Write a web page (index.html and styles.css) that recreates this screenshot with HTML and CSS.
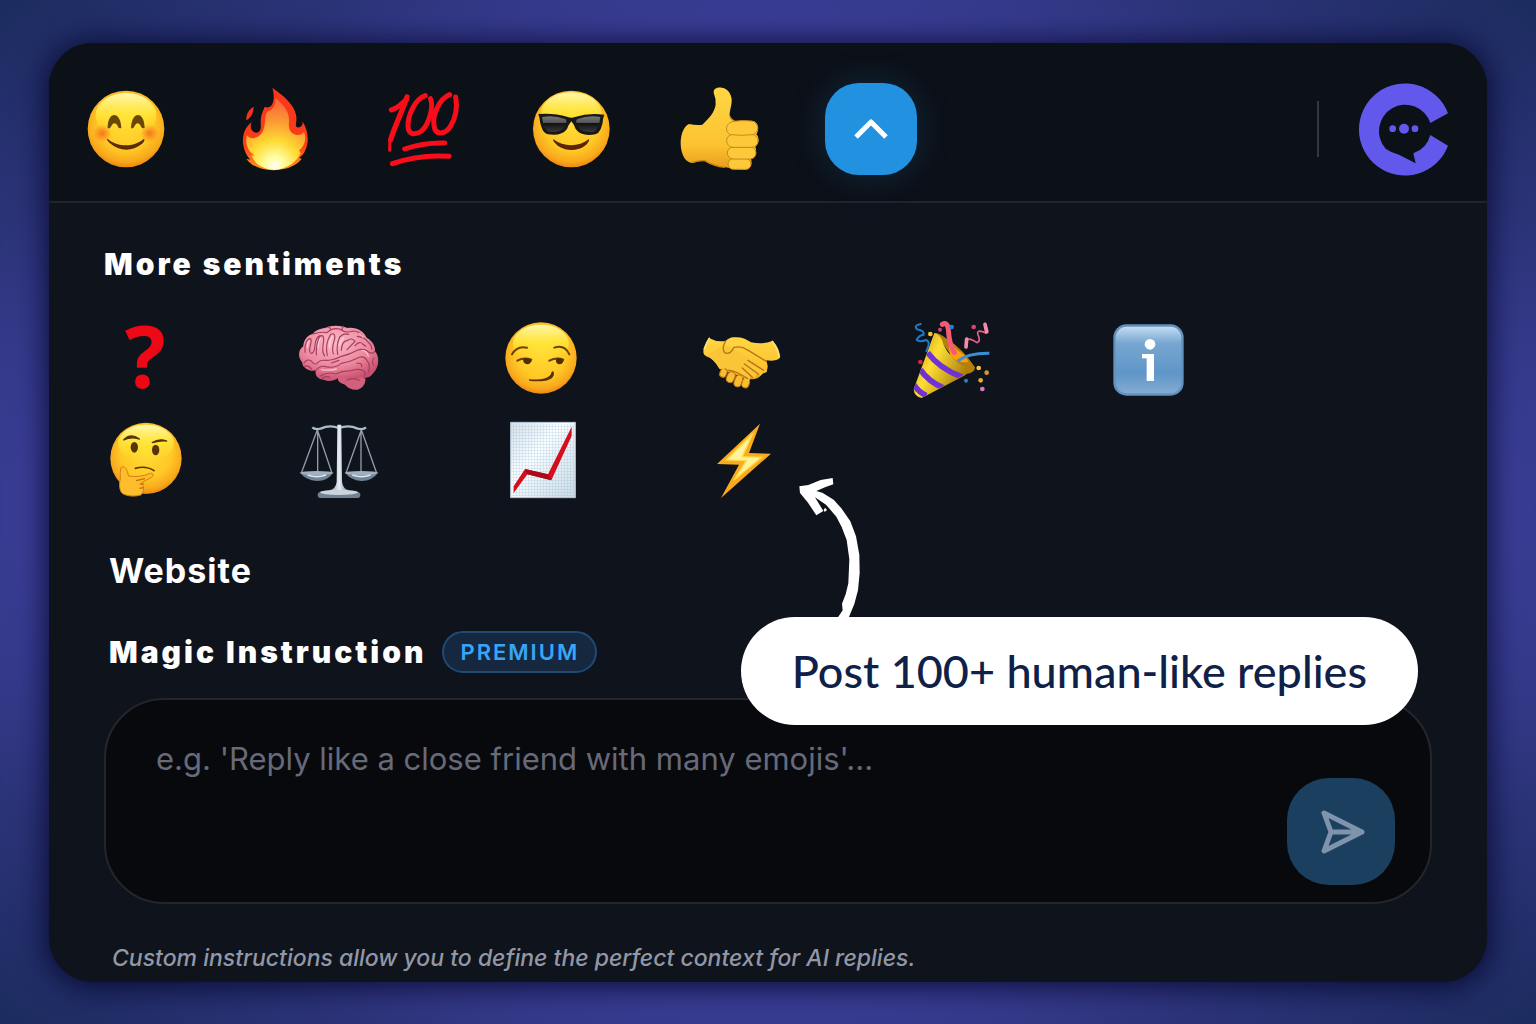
FILE: index.html
```html
<!DOCTYPE html>
<html lang="en">
<head>
    <meta charset="UTF-8">
    <meta name="viewport" content="width=device-width, initial-scale=1.0">
    <title>Reply Composer</title>
    <link rel="stylesheet" href="styles.css">
</head>
<body>
    <!-- Shared gradients -->
    <svg class="defs" width="0" height="0" aria-hidden="true">
        <defs>
            <radialGradient id="face" cx="0.5" cy="0.42" r="0.6">
                <stop offset="0" stop-color="#ffdc35"/>
                <stop offset="0.6" stop-color="#ffc825"/>
                <stop offset="0.85" stop-color="#f9a81c"/>
                <stop offset="1" stop-color="#e87f11"/>
            </radialGradient>
            <linearGradient id="shine" x1="0" y1="0" x2="0" y2="1">
                <stop offset="0" stop-color="#fff8b0"/>
                <stop offset="0.5" stop-color="#ffec3c" stop-opacity="0.7"/>
                <stop offset="1" stop-color="#ffdc2e" stop-opacity="0"/>
            </linearGradient>
            <radialGradient id="blush">
                <stop offset="0" stop-color="#f4581c" stop-opacity="0.75"/>
                <stop offset="1" stop-color="#f4581c" stop-opacity="0"/>
            </radialGradient>
            <linearGradient id="skin" x1="0" y1="0" x2="0" y2="1">
                <stop offset="0" stop-color="#ffd645"/>
                <stop offset="0.7" stop-color="#fcc32f"/>
                <stop offset="1" stop-color="#e79a1f"/>
            </linearGradient>
            <linearGradient id="flame" x1="0" y1="0" x2="0" y2="1">
                <stop offset="0" stop-color="#f8361e"/>
                <stop offset="0.7" stop-color="#fb3d17"/>
                <stop offset="1" stop-color="#ff9a1c"/>
            </linearGradient>
            <radialGradient id="core" gradientUnits="userSpaceOnUse" cx="614" cy="284" r="190">
                <stop offset="0" stop-color="#fffff0"/>
                <stop offset="0.16" stop-color="#fffc9a"/>
                <stop offset="0.4" stop-color="#ffd932"/>
                <stop offset="0.7" stop-color="#fb9a35"/>
                <stop offset="1" stop-color="#f96a35"/>
            </radialGradient>
            <linearGradient id="lens" x1="0" y1="0" x2="0" y2="1">
                <stop offset="0" stop-color="#777"/>
                <stop offset="0.4" stop-color="#555"/>
                <stop offset="0.45" stop-color="#111"/>
                <stop offset="1" stop-color="#3a3a3a"/>
            </linearGradient>
            <radialGradient id="brain" cx="0.45" cy="0.3" r="0.7">
                <stop offset="0" stop-color="#fbb9c4"/>
                <stop offset="0.6" stop-color="#ec8ba0"/>
                <stop offset="1" stop-color="#c9506f"/>
            </radialGradient>
            <linearGradient id="metal" x1="0" y1="0" x2="1" y2="0">
                <stop offset="0" stop-color="#66809a"/>
                <stop offset="0.5" stop-color="#e8f0f6"/>
                <stop offset="1" stop-color="#5f7488"/>
            </linearGradient>
            <linearGradient id="cone" x1="0" y1="0" x2="1" y2="0.6">
                <stop offset="0" stop-color="#b98708"/>
                <stop offset="0.45" stop-color="#ffdf35"/>
                <stop offset="1" stop-color="#a87a0a"/>
            </linearGradient>
            <linearGradient id="info" x1="0" y1="0" x2="0" y2="1">
                <stop offset="0" stop-color="#c3dcf2"/>
                <stop offset="0.25" stop-color="#76a6d1"/>
                <stop offset="0.7" stop-color="#5f96c8"/>
                <stop offset="1" stop-color="#83acd2"/>
            </linearGradient>
            <linearGradient id="paper" x1="0" y1="0" x2="1" y2="1">
                <stop offset="0" stop-color="#d5dee7"/>
                <stop offset="0.4" stop-color="#fdfeff"/>
                <stop offset="1" stop-color="#cbd9e4"/>
            </linearGradient>
            <pattern id="squares" width="9" height="9" patternUnits="userSpaceOnUse">
                <path d="M0 0H9M0 0V9" stroke="#8ebedb" stroke-width="2.4"/>
            </pattern>
            <clipPath id="cone-clip"><path d="M136 99L74 268Q76 290 98 294L258 206Q200 180 170 112Q150 94 136 99Z"/></clipPath>
        </defs>
    </svg>

    <main class="panel">
        <header class="toolbar">
            <button class="tool" type="button" aria-label="Smile">
                <svg viewBox="42 48 252 252">
                    <circle cx="168" cy="174" r="115" fill="url(#face)"/>
                    <ellipse cx="168" cy="132" rx="91" ry="66" fill="url(#shine)"/>
                    <circle cx="97" cy="187" r="27" fill="url(#blush)"/>
                    <circle cx="239" cy="187" r="27" fill="url(#blush)"/>
                    <path d="M113 171C113 119 152 119 154 171Q147 174 144 167C140 153 127 153 123 167Q118 175 113 171Z" fill="#6b4704"/>
                    <path d="M183 171C185 119 223 119 224 171Q217 174 213 167C209 153 197 153 193 167Q187 175 183 171Z" fill="#6b4704"/>
                    <path d="M112 203C143 229 191 230 221 204C227 206 220 216 214 220C188 242 147 242 120 217C113 210 109 205 112 203Z" fill="#5b2c06"/>
                </svg>
            </button>
            <button class="tool" type="button" aria-label="Fire">
                <svg viewBox="489 48 252 252">
                    <path d="M551 107C534 117 528 131 529 148C541 140 550 132 551 107Z" fill="#ef341c"/>
                    <path d="M607 51C631 67 675 99 679 137C681 155 673 166 682 169C694 171 700 161 697 151C714 176 719 211 706 237C702 249 694 255 688 260L695 264C686 275 676 281 666 286C638 301 588 301 560 287C544 281 536 273 529 263L541 266C525 248 515 221 520 194C524 175 534 162 545 154C538 169 544 182 558 185C574 186 573 167 572 153C572 131 581 116 584 107Q594 113 604 104C613 91 613 70 607 51Z" fill="url(#flame)"/>
                    <path d="M617 81C638 100 659 120 657 151C655 172 659 187 680 192C692 193 698 188 702 182C711 205 703 226 687 238L692 247C681 270 657 293 614 297C576 293 553 278 545 253L554 254C532 240 524 215 531 193C541 208 568 203 579 180C590 155 580 135 594 121C608 117 617 103 617 81Z" fill="url(#core)"/>
                </svg>
            </button>
            <button class="tool" type="button" aria-label="Hundred">
                <svg viewBox="36 48 252 252" fill="none" stroke="#fa0d1b" stroke-linecap="round" stroke-linejoin="round">
                    <path d="M64 117Q84 112 110 84" stroke-width="15"/>
                    <path d="M111 78C96 123 75 163 62 206" stroke-width="16"/>
                    <path d="M64 191Q57 214 59 238" stroke-width="9"/>
                    <path d="M166 74C136 83 113 133 114 166C115 195 140 191 155 180C178 158 192 105 181 83" stroke-width="15"/>
                    <path d="M239 71C207 84 187 133 192 164C196 197 228 188 241 167C258 139 262 105 257 78" stroke-width="15"/>
                    <path d="M104 234Q163 214 224 216" stroke-width="15"/>
                    <path d="M67 278Q150 249 237 256" stroke-width="15"/>
                </svg>
            </button>
            <button class="tool" type="button" aria-label="Cool">
                <svg viewBox="483 48 252 252">
                    <circle cx="604" cy="174" r="115" fill="url(#face)"/>
                    <ellipse cx="604" cy="124" rx="90" ry="60" fill="url(#shine)"/>
                    <path d="M550 205C579 228 627 229 656 205C661 209 650 221 643 226C619 242 586 240 563 224C554 216 547 208 550 205Z" fill="#5b2506"/>
                    <path d="M505 129Q552 125 593 138Q604 142 615 138Q655 125 703 131L700 140Q696 184 676 190Q633 197 617 174Q612 160 604 151Q596 160 591 174Q575 196 534 190Q514 187 508 139Z" fill="#181818"/>
                    <path d="M516 138Q552 132 586 144Q593 149 584 168Q570 187 536 182Q521 176 516 138Z" fill="url(#lens)"/>
                    <path d="M691 138Q655 132 622 144Q614 149 624 168Q638 187 672 182Q687 176 691 138Z" fill="url(#lens)"/>
                </svg>
            </button>
            <button class="tool" type="button" aria-label="Thumbs up">
                <svg viewBox="60 48 252 252">
                    <path d="M87 159Q108 163 127 161C145 143 163 126 167 101Q169 86 162 69C157 53 172 47 186 50C204 53 214 70 215 85C216 104 208 119 209 134Q213 144 225 151L277 150C295 152 300 175 289 190C299 200 298 218 286 227C291 238 288 255 273 264C278 277 272 295 258 296Q227 298 197 289Q158 284 134 269Q115 270 97 276C55 274 50 176 87 159Z" fill="url(#skin)"/>
                    <g fill="#fdc93a" stroke="#c98a16" stroke-width="3">
                        <rect x="204" y="263" width="69" height="32" rx="16"/>
                        <rect x="202" y="228" width="86" height="36" rx="18"/>
                        <rect x="200" y="190" width="94" height="39" rx="19"/>
                        <path d="M222 151Q246 147 275 150C298 153 299 188 277 191Q244 195 212 191C194 184 194 156 222 151Z"/>
                    </g>
                    <path d="M210 137Q213 147 225 151M97 274Q117 268 133 268Q160 285 195 289" fill="none" stroke="#c9860f" stroke-width="4"/>
                </svg>
            </button>
            <button class="tool toggle" type="button" aria-label="Show fewer" aria-expanded="true">
                <svg viewBox="0 0 40 40" fill="none" stroke="#fff" stroke-width="5" stroke-linejoin="round">
                    <path d="M5 28L20 13L35 28"/>
                </svg>
            </button>
            <span class="divider"></span>
            <svg class="logo" viewBox="204 66 276 276" role="img" aria-label="Logo" fill="#6259ec">
                <path d="M477 157A138 138 0 1 0 477 254L424 222A79 79 0 0 1 373 277L380 307L330 281Q308 276 290 263A79 79 0 1 1 424 186Z"/>
                <circle cx="311" cy="203" r="10"/>
                <circle cx="345" cy="203" r="15"/>
                <circle cx="378" cy="203" r="10"/>
            </svg>
        </header>

        <div class="content">
            <h2 class="heading">More sentiments</h2>
            <div class="sentiments">
                <button class="sentiment" type="button" aria-label="Question">
                    <svg viewBox="45 54 240 240">
                        <text class="question" x="168" y="264" text-anchor="middle">?</text>
                    </svg>
                </button>
                <button class="sentiment" type="button" aria-label="Brain">
                    <svg viewBox="648 54 240 240">
                        <path d="M750 226Q738 246 768 254Q782 271 806 269Q828 262 830 237L800 218Z" fill="#d0607c"/>
                        <path d="M640 188C626 172 627 150 643 139C643 119 657 105 672 101C684 83 709 86 718 80C739 74 763 78 776 84C803 81 823 93 833 113C851 123 860 140 858 154C873 171 870 203 853 219C844 233 829 236 817 232C798 240 772 235 752 231C736 244 718 246 704 239C688 239 677 228 680 211C666 216 639 204 640 188Z" fill="url(#brain)"/>
                        <g fill="none" stroke="#a63d60" stroke-width="3.5" stroke-linecap="round">
                            <path d="M645 189Q654 174 668 184Q671 192 683 192Q691 179 709 181Q732 181 754 170Q782 164 806 150Q827 144 841 158Q855 162 857 154"/>
                            <path d="M681 211Q693 195 711 200Q737 206 757 190Q785 185 804 175Q823 164 834 181Q846 196 838 217"/>
                            <path d="M694 228Q718 214 740 222Q764 211 783 213Q804 204 820 211Q832 216 827 229"/>
                            <path d="M648 157Q646 128 659 117Q671 111 664 137Q658 159 668 160Q677 158 678 136Q680 111 693 107M682 165Q681 132 691 111Q705 99 704 123Q697 157 707 168"/>
                            <path d="M715 166Q707 132 725 103Q740 96 737 117Q726 151 734 162M746 163Q741 136 752 111Q764 98 779 103M757 151Q759 123 774 122Q788 111 798 124Q788 135 774 149"/>
                            <path d="M672 102Q697 94 714 98Q729 82 752 87Q770 101 791 93Q814 93 820 111M805 109Q828 112 837 126Q849 136 848 147M798 137Q812 121 821 132L830 139M718 80L727 89M763 79L758 90"/>
                            <path d="M698 236Q711 226 723 232M774 241Q790 231 811 241M855 174Q847 184 853 195M647 199Q657 194 668 207M804 190Q820 188 818 200M727 189L750 181"/>
                        </g>
                        <path d="M655 143Q654 130 660 123M687 142Q689 122 695 115M722 143Q720 125 730 109M751 136Q753 122 764 113M812 100L822 112M697 209Q722 213 742 207M820 151Q833 151 838 169" fill="none" stroke="#ffdae0" stroke-width="4" stroke-linecap="round" opacity="0.75"/>
                    </svg>
                </button>
                <button class="sentiment" type="button" aria-label="Smirk">
                    <svg viewBox="51 54 240 240">
                        <circle cx="156" cy="174" r="107" fill="url(#face)"/>
                        <ellipse cx="156" cy="130" rx="84" ry="56" fill="url(#shine)"/>
                        <g fill="none" stroke="#6c4203" stroke-width="6" stroke-linecap="round">
                            <path d="M69 163Q84 136 114 143M196 143Q227 133 241 163"/>
                            <path d="M85 182Q105 170 127 179M181 182Q203 170 223 179"/>
                        </g>
                        <path d="M102 177Q118 171 128 181Q126 192 115 193Q102 192 102 177ZM201 177Q214 171 224 181Q222 193 211 193Q199 192 201 177Z" fill="#4c2d05"/>
                        <path d="M120 238C153 241 184 235 187 218Q192 209 195 219C196 244 161 245 124 243Q118 242 120 238Z" fill="#5b3005"/>
                    </svg>
                </button>
                <button class="sentiment" type="button" aria-label="Handshake">
                    <svg viewBox="654 54 240 240">
                        <path d="M661 115Q652 125 645 143Q639 163 651 168Q675 176 691 206L776 237Q807 242 819 223Q837 215 836 198L832 181Q861 185 872 174Q872 144 850 123Q824 134 786 127Q762 109 735 112Q724 110 710 123Q683 127 661 115Z" fill="url(#skin)"/>
                        <g fill="#f9bd32" stroke="#ba7710" stroke-width="3">
                            <rect x="693" y="205" width="20" height="27" rx="10" transform="rotate(22 703 219)"/>
                            <rect x="714" y="215" width="23" height="33" rx="11" transform="rotate(23 725 231)"/>
                            <rect x="737" y="225" width="22" height="36" rx="11" transform="rotate(20 748 243)"/>
                            <rect x="759" y="234" width="22" height="30" rx="11" transform="rotate(15 770 249)"/>
                        </g>
                        <path d="M691 205Q672 172 651 168L703 136Q738 145 772 170L835 212Q831 222 819 215Q822 231 801 223Q804 238 782 231Q787 243 772 241Q751 219 736 218Q718 199 702 207Z" fill="#fac638"/>
                        <path d="M710 123Q697 145 707 158Q724 166 735 142Q758 137 774 149L832 184M777 181L824 211M766 192L809 223M760 204L790 232M718 211Q736 210 776 236" fill="none" stroke="#b87310" stroke-width="4" stroke-linecap="round"/>
                        <path d="M661 115Q653 127 646 146M850 124Q868 147 871 171" fill="none" stroke="#ffe17a" stroke-width="5" stroke-linecap="round"/>
                    </svg>
                </button>
                <button class="sentiment" type="button" aria-label="Party">
                    <svg viewBox="57 54 240 240">
                        <path d="M136 99Q151 99 171 115Q220 145 258 202Q258 219 230 222Z" fill="#b57f0b"/>
                        <path d="M179 140Q187 126 205 151Q227 162 238 185Q211 193 184 169Z" fill="#ff9d0c"/>
                        <path d="M136 99L74 268Q76 290 98 294L231 224Q238 215 233 206Q181 174 164 135Q155 101 136 99Z" fill="url(#cone)"/>
                        <g clip-path="url(#cone-clip)" fill="none" stroke="#7132d4" stroke-width="17">
                            <path d="M116 158Q151 206 219 231"/>
                            <path d="M94 209Q119 246 166 265"/>
                            <path d="M75 254Q87 275 112 287"/>
                        </g>
                        <path d="M160 73Q174 64 178 87Q180 132 196 157" fill="none" stroke="#f65a76" stroke-width="15" stroke-linecap="round"/>
                        <path d="M206 183Q238 159 301 160" fill="none" stroke="#3990d6" stroke-width="9"/>
                        <path d="M95 72Q73 76 84 88Q106 92 104 104Q91 105 83 119Q93 128 111 120Q127 126 112 153" fill="none" stroke="#2179c6" stroke-width="6" stroke-linecap="round"/>
                        <path d="M288 75Q302 95 291 99Q264 86 266 102Q277 124 264 128Q240 112 235 120" fill="none" stroke="#e9618b" stroke-width="5" stroke-linecap="round"/>
                        <path d="M288 73L293 96M233 117L231 141" stroke="#f58aab" stroke-width="11" stroke-linecap="round"/>
                        <circle cx="124" cy="102" r="7" fill="#f5c925"/><circle cx="153" cy="89" r="6" fill="#c8477e"/>
                        <circle cx="188" cy="81" r="7" fill="#1685d0"/><circle cx="254" cy="81" r="7" fill="#d94470"/>
                        <circle cx="94" cy="186" r="7" fill="#df2632"/><circle cx="231" cy="242" r="6" fill="#327fbd"/>
                        <circle cx="269" cy="204" r="7" fill="#ffc542"/><circle cx="293" cy="218" r="7" fill="#d7942f"/>
                        <circle cx="275" cy="241" r="7" fill="#e5ad3e"/><circle cx="280" cy="267" r="7" fill="#da78c6"/>
                    </svg>
                </button>
                <button class="sentiment" type="button" aria-label="Info">
                    <svg viewBox="660 54 240 240">
                        <rect x="673" y="73" width="211" height="214" rx="39" fill="#6391bd"/>
                        <rect x="680" y="80" width="197" height="200" rx="33" fill="url(#info)"/>
                        <circle cx="783" cy="133" r="16" fill="#fff"/>
                        <rect x="773" y="162" width="22" height="81" fill="#fff"/>
                        <rect x="759" y="162" width="20" height="13" fill="#fff"/>
                    </svg>
                </button>
                <button class="sentiment" type="button" aria-label="Thinking">
                    <svg viewBox="45 357 240 240">
                        <circle cx="171" cy="475" r="107" fill="url(#face)"/>
                        <ellipse cx="171" cy="430" rx="84" ry="56" fill="url(#shine)"/>
                        <path d="M104 420Q124 397 151 417Q126 409 104 420ZM190 428Q210 414 233 423Q214 421 190 428Z" fill="#563407" stroke="#563407" stroke-width="4" stroke-linejoin="round"/>
                        <ellipse cx="136" cy="442" rx="11" ry="16" fill="#593409"/>
                        <ellipse cx="200" cy="450" rx="11" ry="16" fill="#593409"/>
                        <path d="M139 505Q171 496 195 512" fill="none" stroke="#5c3505" stroke-width="5" stroke-linecap="round"/>
                        <path d="M101 500C113 501 115 516 119 528Q150 534 184 520C194 518 196 529 184 534L158 548C166 558 165 579 155 585Q126 593 103 582C90 576 90 550 94 537Q92 517 96 503Z" fill="#fdbd2d" stroke="#d38211" stroke-width="3"/>
                        <path d="M141 542L168 536M152 553L164 551M151 565L164 563" fill="none" stroke="#bd7009" stroke-width="4"/>
                    </svg>
                </button>
                <button class="sentiment" type="button" aria-label="Scales">
                    <svg viewBox="648 357 240 240">
                        <path d="M685 389L638 517M685 389L728 517M686 389V520M817 389L772 517M817 389L862 517M816 389V520" stroke="#939ba6" stroke-width="4"/>
                        <path d="M670 382Q678 390 695 386Q722 373 750 384Q779 373 806 386Q823 390 831 382" fill="none" stroke="#a9bdcd" stroke-width="7"/>
                        <path d="M745 374H757L759 545Q761 568 783 571H718Q741 568 743 545Z" fill="url(#metal)"/>
                        <path d="M632 517H733Q718 543 684 543Q649 541 632 517ZM767 517H868Q851 543 817 543Q784 541 767 517Z" fill="#718497"/>
                        <ellipse cx="683" cy="519" rx="49" ry="6" fill="#9fb0c0"/>
                        <ellipse cx="817" cy="519" rx="49" ry="6" fill="#9fb0c0"/>
                        <path d="M656 525Q684 535 711 525M790 525Q817 535 845 525" fill="none" stroke="#dde7ef" stroke-width="5"/>
                        <rect x="686" y="576" width="128" height="18" rx="9" fill="#718294"/>
                        <ellipse cx="750" cy="577" rx="57" ry="8" fill="#cbd5de"/>
                    </svg>
                </button>
                <button class="sentiment" type="button" aria-label="Chart">
                    <svg viewBox="51 357 240 240">
                        <rect x="64" y="366" width="196" height="228" fill="url(#paper)"/>
                        <rect x="68" y="372" width="187" height="216" fill="url(#squares)" opacity="0.65"/>
                        <path d="M65 367H259V593H65Z" fill="none" stroke="#a9bac9" stroke-width="3"/>
                        <path d="M74 559L108 507L177 523L248 380V408L187 541L115 523L74 579Z" fill="#d50d1c"/>
                        <path d="M108 507L177 523L187 541L115 523Z" fill="#a80b17"/>
                    </svg>
                </button>
                <button class="sentiment" type="button" aria-label="Lightning">
                    <svg viewBox="654 357 240 240">
                        <path d="M813 371L684 492L750 494L696 594L846 461L780 459Z" fill="#fba91d"/>
                        <path d="M792 400L712 480L772 482L735 540L818 472L760 470Z" fill="#fff3a0" stroke="#ffda45" stroke-width="4"/>
                    </svg>
                </button>
            </div>

            <h2 class="heading website">Website</h2>

            <section class="magic">
                <div class="magic-head">
                    <label class="heading" for="instruction">Magic Instruction</label>
                    <span class="badge">PREMIUM</span>
                </div>
                <div class="composer">
                    <textarea id="instruction" placeholder="e.g. 'Reply like a close friend with many emojis'..."></textarea>
                    <button class="send" type="button" aria-label="Send">
                        <svg viewBox="-24 -24 48 48" fill="none" stroke="#8093ad" stroke-width="5" stroke-linecap="round" stroke-linejoin="round">
                            <path d="M-17 -19L21 0L-17 19L-10 0ZM-10 0H21"/>
                        </svg>
                    </button>
                </div>
                <p class="note">Custom instructions allow you to define the perfect context for AI replies.</p>

                <div class="callout">
                    <svg class="arrow" viewBox="159 45 225 426" fill="#fff" aria-hidden="true">
                        <path d="M184 79L211 75L248 60L284 54L286 73L261 82L235 93L253 98L287 119L310 145L337 184L354 229L364 284L365 339L360 391L349 432L332 473H299L314 451L312 431L323 403L331 370L334 298L326 240L311 201L295 170L264 134L231 112L256 153L235 166L210 128L186 99Z"/>
                        <path d="M257 150L261 143L267 150L260 156Z"/>
                    </svg>
                    Post 100+ human-like replies
                </div>
            </section>
        </div>
    </main>
</body>
</html>
```

FILE: styles.css
```css
* {
    margin: 0;
    padding: 0;
    box-sizing: border-box;
}

body {
    font-family: Inter, 'Liberation Sans', sans-serif;
    background: radial-gradient(ellipse, #3b3e97 68%, #2c3479 80%, #1b2b5e 100%);
    min-height: 100vh;
    padding: 43px 49px 42px;
    color: #fff;
}

button {
    border: none;
    background: none;
    cursor: pointer;
}

svg {
    display: block;
    overflow: visible;
}

.defs {
    position: absolute;
}

.panel {
    background: #0f131c;
    border-radius: 44px;
    box-shadow: 0 2px 30px 4px rgba(4, 6, 40, 0.85);
}

/* Top bar */
.toolbar {
    display: flex;
    align-items: center;
    gap: 57px;
    padding: 40px 38px 26px 31px;
    background: #0c1017;
    border-bottom: 2px solid #20242c;
    border-radius: 44px 44px 0 0;
}

.tool {
    display: flex;
    align-items: center;
    justify-content: center;
    width: 92px;
    height: 92px;
}

.tool svg {
    width: 84px;
    height: 84px;
}

.toggle {
    background: #2291df;
    border-radius: 34px;
    box-shadow: 0 0 36px rgba(34, 145, 223, 0.2);
}

.toggle svg {
    width: 40px;
    height: 40px;
}

.divider {
    width: 2px;
    height: 56px;
    margin-left: auto;
    margin-right: -19px;
    background: #33373f;
}

.logo {
    width: 92px;
    height: 92px;
}

/* Body */
.content {
    padding: 43px 55px 10px;
}

.heading {
    font-size: 30px;
    font-weight: 900;
    line-height: 36px;
    letter-spacing: 3px;
}

.sentiments {
    display: grid;
    grid-template-columns: repeat(6, 80px);
    gap: 21px 121px;
    margin: 36px 0 52px;
}

.sentiment,
.sentiment svg {
    width: 80px;
    height: 80px;
}

.question {
    font-family: 'Noto Sans', sans-serif;
    font-size: 256px;
    font-weight: 700;
    fill: #ee0714;
}

.website {
    padding-left: 5px;
    font-size: 34px;
    font-weight: 700;
    line-height: 40px;
    letter-spacing: 1px;
}

.magic {
    position: relative;
    margin-top: 40px;
}

.magic-head {
    display: flex;
    align-items: center;
    gap: 16px;
    padding-left: 5px;
    margin-bottom: 25px;
}

.badge {
    padding: 0 16px;
    border: 2px solid #1f4a75;
    border-radius: 21px;
    background: #152840;
    color: #38a6f8;
    font-size: 22px;
    font-weight: 600;
    line-height: 38px;
    letter-spacing: 2px;
}

.composer {
    position: relative;
}

.composer textarea {
    display: block;
    width: 100%;
    height: 206px;
    padding: 40px 150px 40px 50px;
    border: 2px solid #24262d;
    border-radius: 60px;
    background: #08090d;
    color: #fff;
    font-family: inherit;
    font-size: 31px;
    line-height: 38px;
    resize: none;
    outline: none;
}

.composer textarea::placeholder {
    color: #676a79;
}

.send {
    position: absolute;
    right: 37px;
    bottom: 19px;
    display: flex;
    align-items: center;
    justify-content: center;
    width: 108px;
    height: 107px;
    border-radius: 42px;
    background: #1b405f;
}

.send svg {
    width: 48px;
    height: 48px;
}

.note {
    margin-top: 40px;
    padding-left: 8px;
    color: #9297a6;
    font-size: 23px;
    font-style: italic;
    font-weight: 500;
    line-height: 28px;
}

/* Callout bubble over the composer */
.callout {
    position: absolute;
    top: -14px;
    right: 14px;
    padding: 0 51px;
    border-radius: 54px;
    background: #fff;
    color: #0f2148;
    font-family: Lato, sans-serif;
    font-size: 45px;
    font-weight: 500;
    line-height: 108px;
    white-space: nowrap;
}

.arrow {
    position: absolute;
    left: 50px;
    bottom: 108px;
    width: 75px;
    height: 142px;
}
```
